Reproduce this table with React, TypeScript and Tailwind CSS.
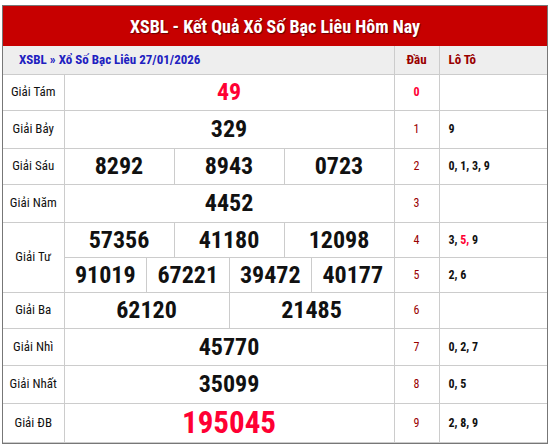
import React from "react"

type Row = {
  label: string
  nums: string[][]
  heights: number[]
  big?: boolean
  red?: boolean
}

const rows: Row[] = [
  { label: "Giải Tám", nums: [["49"]], heights: [36], red: true },
  { label: "Giải Bảy", nums: [["329"]], heights: [38] },
  { label: "Giải Sáu", nums: [["8292", "8943", "0723"]], heights: [36] },
  { label: "Giải Năm", nums: [["4452"]], heights: [38] },
  {
    label: "Giải Tư",
    nums: [
      ["57356", "41180", "12098"],
      ["91019", "67221", "39472", "40177"],
    ],
    heights: [35, 35],
  },
  { label: "Giải Ba", nums: [["62120", "21485"]], heights: [36] },
  { label: "Giải Nhì", nums: [["45770"]], heights: [37] },
  { label: "Giải Nhất", nums: [["35099"]], heights: [38] },
  { label: "Giải ĐB", nums: [["195045"]], heights: [39], big: true, red: true },
]

const loto: { dau: string; lo: React.ReactNode }[] = [
  { dau: "0", lo: "" },
  { dau: "1", lo: "9" },
  { dau: "2", lo: "0, 1, 3, 9" },
  { dau: "3", lo: "" },
  {
    dau: "4",
    lo: (
      <>
        3, <span className="text-[#ff0033]">5,</span> 9
      </>
    ),
  },
  { dau: "5", lo: "2, 6" },
  { dau: "6", lo: "" },
  { dau: "7", lo: "0, 2, 7" },
  { dau: "8", lo: "0, 5" },
  { dau: "9", lo: "2, 8, 9" },
]

const font = { fontFamily: "Roboto, 'Liberation Sans', sans-serif" }

export default function App() {
  let lotoIdx = 0
  return (
    <div className="bg-white w-[559px] h-[447px] pt-[5px] pl-[2px]" style={font}>
      <div className="w-[546px] border border-[#777] [font-stretch:condensed]">
        <div className="h-[40px] bg-[#c70000] flex items-center justify-center text-white font-bold text-[18px] [text-shadow:1px_1px_1px_#600]">
          XSBL - Kết Quả Xổ Số Bạc Liêu Hôm Nay
        </div>
        <table className="w-full border-collapse table-fixed">
          <colgroup>
            <col className="w-[61px]" />
            <col className="w-[330px]" />
            <col className="w-[45px]" />
            <col />
          </colgroup>
          <tbody>
            <tr className="h-[28px] bg-[#eeeeee]">
              <td colSpan={2} className="border-b border-[#ccc] pl-[16px] text-[13px] font-bold text-[#2020c0]">
                XSBL » Xổ Số Bạc Liêu 27/01/2026
              </td>
              <td className="border-b border-l border-[#ccc] text-center text-[13px] font-bold text-[#990000]">Đầu</td>
              <td className="border-b border-l border-[#ccc] pl-[9px] text-[13px] font-bold text-[#990000]">Lô Tô</td>
            </tr>
            {rows.map((r) =>
              r.nums.map((line, li) => {
                const l = loto[lotoIdx++]
                return (
                  <tr key={r.label + li} style={{ height: r.heights[li] }}>
                    {li === 0 && (
                      <td
                        rowSpan={r.nums.length}
                        className="border-b border-[#ccc] text-center text-[13px] text-[#111]"
                      >
                        {r.label}
                      </td>
                    )}
                    <td className="border-b border-l border-[#ccc] p-0">
                      <div className="flex h-full">
                        {line.map((n, ni) => (
                          <div
                            key={n}
                            className={`flex-1 text-center font-bold leading-none ${
                              ni > 0 ? "border-l border-[#ccc]" : ""
                            } ${r.big ? "text-[31px]" : "text-[24px]"} ${r.red ? "text-[#ff0033]" : "text-[#111]"}`}
                            style={{ lineHeight: `${r.heights[li] - 1}px` }}
                          >
                            {n}
                          </div>
                        ))}
                      </div>
                    </td>
                    <td
                      className={`border-b border-l border-[#ccc] text-center text-[12px] ${
                        l.dau === "0" ? "text-[#ff0033] font-bold" : "text-[#990000]"
                      }`}
                    >
                      {l.dau}
                    </td>
                    <td className="border-b border-l border-[#ccc] pl-[9px] text-[12px] font-bold text-[#111]">
                      {l.lo}
                    </td>
                  </tr>
                )
              })
            )}
          </tbody>
        </table>
      </div>
    </div>
  )
}
